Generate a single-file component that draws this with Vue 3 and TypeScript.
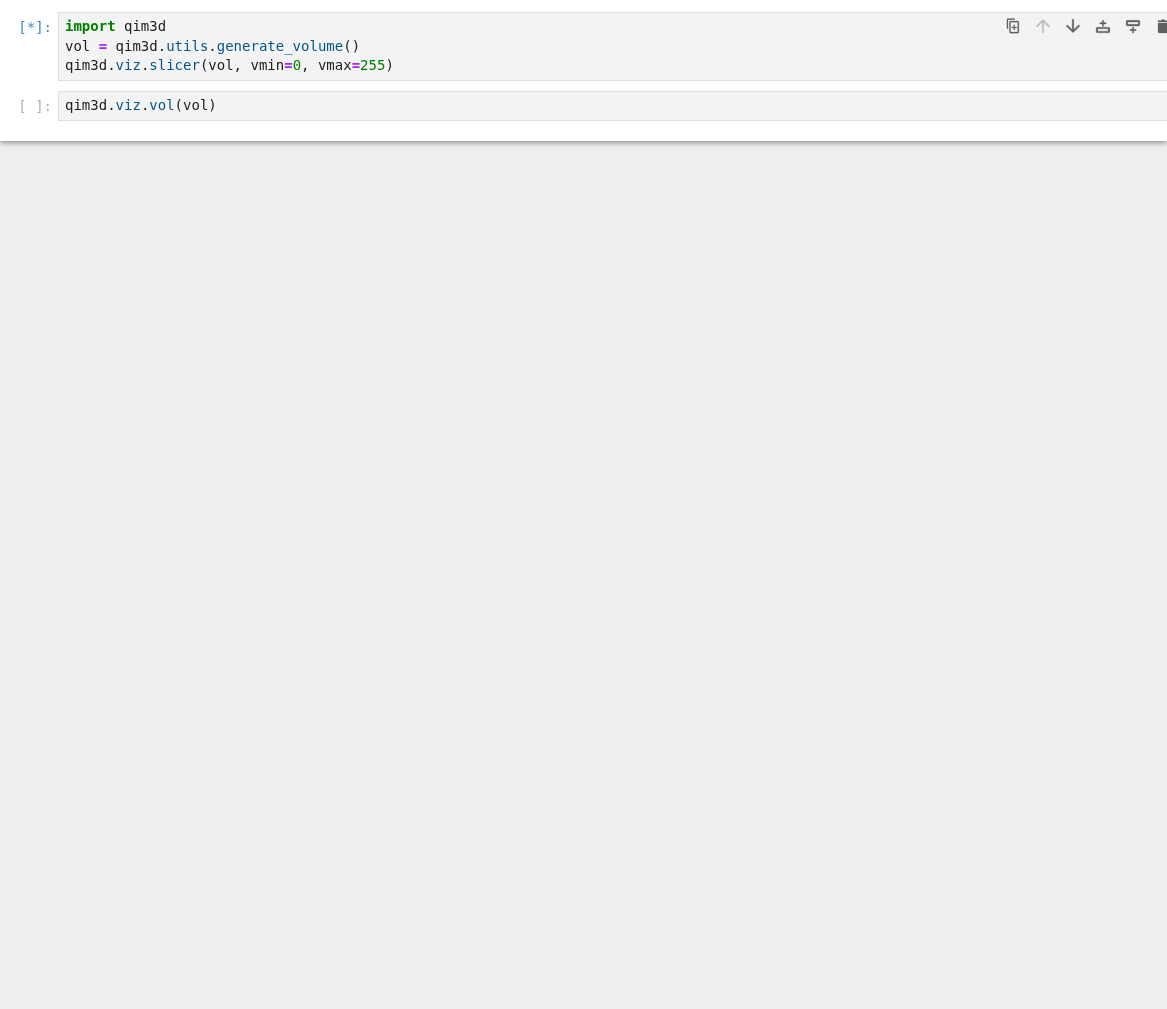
<script setup lang="ts">
type Tok = { t: string; c?: string }
interface Cell { prompt: string; running: boolean; lines: Tok[][] }
const cells: Cell[] = [
  {
    prompt: '[*]:',
    running: true,
    lines: [
      [{ t: 'import', c: 'kw' }, { t: ' qim3d' }],
      [{ t: 'vol ' }, { t: '=', c: 'op' }, { t: ' qim3d.' }, { t: 'utils', c: 'prop' }, { t: '.' }, { t: 'generate_volume', c: 'prop' }, { t: '()' }],
      [{ t: 'qim3d.' }, { t: 'viz', c: 'prop' }, { t: '.' }, { t: 'slicer', c: 'prop' }, { t: '(vol, vmin' }, { t: '=', c: 'op' }, { t: '0', c: 'num' }, { t: ', vmax' }, { t: '=', c: 'op' }, { t: '255', c: 'num' }, { t: ')' }],
    ],
  },
  {
    prompt: '[ ]:',
    running: false,
    lines: [[{ t: 'qim3d.' }, { t: 'viz', c: 'prop' }, { t: '.' }, { t: 'vol', c: 'prop' }, { t: '(vol)' }]],
  },
]
</script>

<template>
  <div class="page">
    <div class="notebook">
      <div v-for="(cell, i) in cells" :key="i" class="cell">
        <div class="prompt" :class="{ running: cell.running }">{{ cell.prompt }}</div>
        <div class="editor">
          <pre v-for="(line, j) in cell.lines" :key="j" class="line"><span v-for="(tok, k) in line" :key="k" :class="tok.c">{{ tok.t }}</span></pre>
          <div v-if="i === 0" class="toolbar">
            <button class="tool" aria-label="Duplicate">
              <svg width="14" height="16" viewBox="0 0 14 16"><path fill-rule="evenodd" d="M2 .6h6.300c.3 0 .6.3.6.6s-.3.6-.6.6H2.600c-.3 0-.6.3-.6.6v7.800c0 .3-.2.6-.5.6s-.6-.3-.6-.6V1.800C.9 1.100 1.400.6 2 .6Zm2.600 2.400h7.100c.7 0 1.200.5 1.200 1.200v9.900c0 .7-.5 1.200-1.200 1.200H4.600c-.7 0-1.200-.5-1.200-1.200V4.200c0-.7.5-1.200 1.200-1.200Zm0 1.200v9.900h7.100V4.200H4.600Zm3.100 2.600h1v2.100h2v1h-2V12h-1V9.900h-2v-1h2V6.800Z"/></svg>
            </button>
            <button class="tool disabled" aria-label="Move up">
              <svg width="16" height="16" viewBox="0 0 14 14"><path d="M13 7 12 8 7.700 3.800V13H6.300V3.800L2 8 1 7l6-6 6 6Z"/></svg>
            </button>
            <button class="tool" aria-label="Move down">
              <svg width="16" height="16" viewBox="0 0 14 14"><path d="M1 7l1-1 4.300 4.200V1h1.400v9.200L12 6l1 1-6 6-6-6Z"/></svg>
            </button>
            <button class="tool" aria-label="Insert above">
              <svg width="16" height="16" viewBox="0 0 14 14"><path d="M6.400 1.900h1.200v2.100h2.100v1.200H7.600v2.100H6.400V5.200H4.300V4h2.100V1.900Z"/><path d="M11.500 9.500v2h-9v-2h9ZM12 8H2c-.55 0-1 .45-1 1v3c0 .55.45 1 1 1h10c.55 0 1-.45 1-1V9c0-.55-.45-1-1-1Z"/></svg>
            </button>
            <button class="tool" aria-label="Insert below">
              <svg width="16" height="16" viewBox="0 0 14 14"><path d="M6.400 7.800h1.200v2.100h2.100v1.200H7.600v2.100H6.400v-2.100H4.300V9.900h2.100V7.800Z"/><path d="M2.500 5.500v-2h9v2h-9ZM2 7h10c.55 0 1-.45 1-1V3c0-.55-.45-1-1-1H2c-.55 0-1 .45-1 1v3c0 .55.45 1 1 1Z"/></svg>
            </button>
            <button class="tool" aria-label="Delete">
              <svg width="16" height="16" viewBox="0 0 16 16"><path d="M3 5h10v8.500c0 .9-.7 1.500-1.500 1.500h-7C3.700 15 3 14.400 3 13.500V5ZM3 2.500h3L7 1.500h2l1 1h3V4H3V2.500Z"/></svg>
            </button>
          </div>
        </div>
      </div>
    </div>
  </div>
</template>

<style>
html, body { margin: 0; background: #eeeeee; }
</style>

<style scoped>
.page {
  width: 1167px;
  height: 1009px;
  overflow: hidden;
  background: #eeeeee;
}
.notebook {
  height: 141px;
  box-sizing: border-box;
  padding-top: 12px;
  background: #ffffff;
  box-shadow: 0 1px 6px rgba(0, 0, 0, 0.5);
  display: flex;
  flex-direction: column;
  gap: 10px;
}
.cell {
  display: flex;
  align-items: flex-start;
}
.prompt {
  width: 58px;
  box-sizing: border-box;
  padding: 5px 6px 0 0;
  text-align: right;
  font: 14px/21px "DejaVu Sans Mono", monospace;
  color: #b0b0b0;
  will-change: opacity;
}
.prompt.running { color: #3f88c5; }
.editor {
  position: relative;
  flex: 1;
  box-sizing: border-box;
  padding: 4px 0 4.500px 6px;
  background: #f3f3f3;
  border: 1px solid #e0e0e0;
  border-right: 0;
}
.line {
  margin: 0;
  font: 14px/19.500px "DejaVu Sans Mono", monospace;
  color: #212121;
  white-space: pre;
  will-change: opacity;
}
.kw { color: #008000; font-weight: 700; }
.op { color: #aa22ff; font-weight: 700; }
.prop { color: #05568c; }
.num { color: #008000; }
.toolbar {
  position: absolute;
  top: 0;
  left: 941px;
  display: flex;
  gap: 4px;
}
.tool {
  width: 26px;
  height: 26px;
  padding: 0;
  border: 0;
  background: none;
  display: flex;
  align-items: center;
  justify-content: center;
}
.tool svg { fill: #616161; stroke: #616161; stroke-width: 0.25; display: block; }
.tool.disabled svg { fill: #bdbdbd; stroke: #bdbdbd; }
</style>
